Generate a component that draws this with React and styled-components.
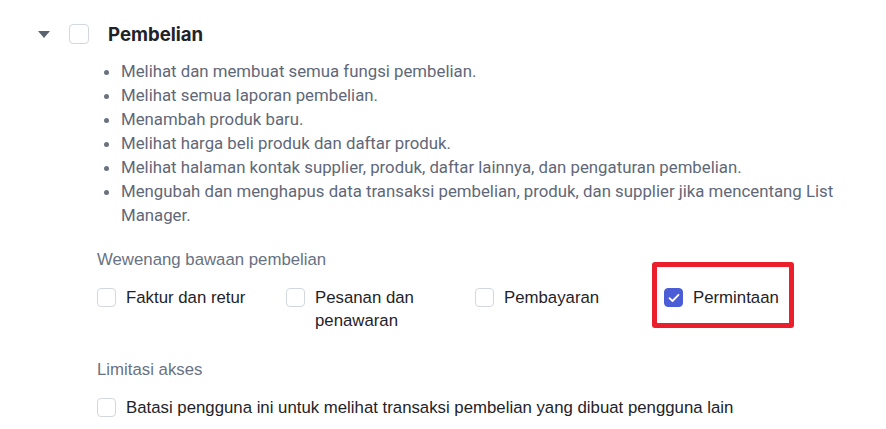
import React from 'react';
import styled, { createGlobalStyle } from 'styled-components';

const GlobalStyle = createGlobalStyle`
  body {
    margin: 0;
    background: #fff;
    font-family: "Liberation Sans", Arial, sans-serif;
  }
`;

const Section = styled.div`
  padding: 24px 0 0 0;
`;

const Header = styled.div`
  display: flex;
  align-items: center;
  height: 20px;
  padding-left: 38px;
`;

const Caret = styled.span`
  width: 0;
  height: 0;
  border-left: 6px solid transparent;
  border-right: 6px solid transparent;
  border-top: 7px solid #5b6270;
  margin-right: 19px;
`;

const Box = styled.span`
  box-sizing: border-box;
  flex: none;
  width: ${p => p.size || 19}px;
  height: ${p => p.size || 19}px;
  border: 1px solid ${p => (p.checked ? '#4a5dd6' : '#d3d7df')};
  background: ${p => (p.checked ? '#4a5dd6' : '#fff')};
  border-radius: 4px;
  display: flex;
  align-items: center;
  justify-content: center;
`;

const Title = styled.div`
  margin-left: 19px;
  font-family: Inter, "Liberation Sans", sans-serif;
  font-weight: 700;
  font-size: 18.6px;
  color: #1f2329;
`;

const Body = styled.div`
  padding-left: 97px;
  padding-right: 40px;
`;

const List = styled.ul`
  margin: 15px 0 0;
  padding-left: 24px;
  font-family: Roboto, sans-serif;
  font-size: 16.8px;
  line-height: 24px;
  color: #5f6878;
  li::marker {
    color: #6b7280;
  }
`;

const Caption = styled.div`
  margin-top: ${p => p.gap}px;
  font-size: 16.8px;
  line-height: 20px;
  color: #687282;
`;

const Options = styled.div`
  display: grid;
  grid-template-columns: repeat(4, 189px);
  margin-top: 16px;
`;

const Option = styled.label`
  position: relative;
  display: flex;
  align-items: flex-start;
  gap: 10px;
  font-size: 16.8px;
  line-height: 23px;
  color: #1f2329;
  padding-right: 20px;
  ${Box} {
    margin-top: 2px;
  }
`;

const Single = styled(Option)`
  margin-top: 16px;
  padding-right: 0;
`;

const Highlight = styled.span`
  position: absolute;
  left: -12px;
  top: -24px;
  width: 142px;
  height: 66px;
  box-sizing: border-box;
  border: 5px solid #ea1f2b;
  border-radius: 3px;
  pointer-events: none;
`;

const Check = () => (
  <svg width="12" height="10" viewBox="0 0 12 10" fill="none">
    <path d="M1.5 5.2 L4.5 8 L10.5 1.8" stroke="#fff" strokeWidth="1.8" strokeLinecap="round" strokeLinejoin="round" />
  </svg>
);

const bullets = [
  'Melihat dan membuat semua fungsi pembelian.',
  'Melihat semua laporan pembelian.',
  'Menambah produk baru.',
  'Melihat harga beli produk dan daftar produk.',
  'Melihat halaman kontak supplier, produk, daftar lainnya, dan pengaturan pembelian.',
  'Mengubah dan menghapus data transaksi pembelian, produk, dan supplier jika mencentang List Manager.',
];

const defaults = [
  { label: 'Faktur dan retur' },
  { label: 'Pesanan dan penawaran' },
  { label: 'Pembayaran' },
  { label: 'Permintaan', checked: true, marked: true },
];

export default function App() {
  return (
    <>
      <GlobalStyle />
      <Section>
        <Header>
          <Caret />
          <Box size={20} />
          <Title>Pembelian</Title>
        </Header>
        <Body>
          <List>
            {bullets.map(b => <li key={b}>{b}</li>)}
          </List>
          <Caption gap={23}>Wewenang bawaan pembelian</Caption>
          <Options>
            {defaults.map(o => (
              <Option key={o.label}>
                <Box checked={o.checked}>{o.checked && <Check />}</Box>
                <span>{o.label}</span>
                {o.marked && <Highlight />}
              </Option>
            ))}
          </Options>
          <Caption gap={28}>Limitasi akses</Caption>
          <Single>
            <Box />
            <span>Batasi pengguna ini untuk melihat transaksi pembelian yang dibuat pengguna lain</span>
          </Single>
        </Body>
      </Section>
    </>
  );
}
